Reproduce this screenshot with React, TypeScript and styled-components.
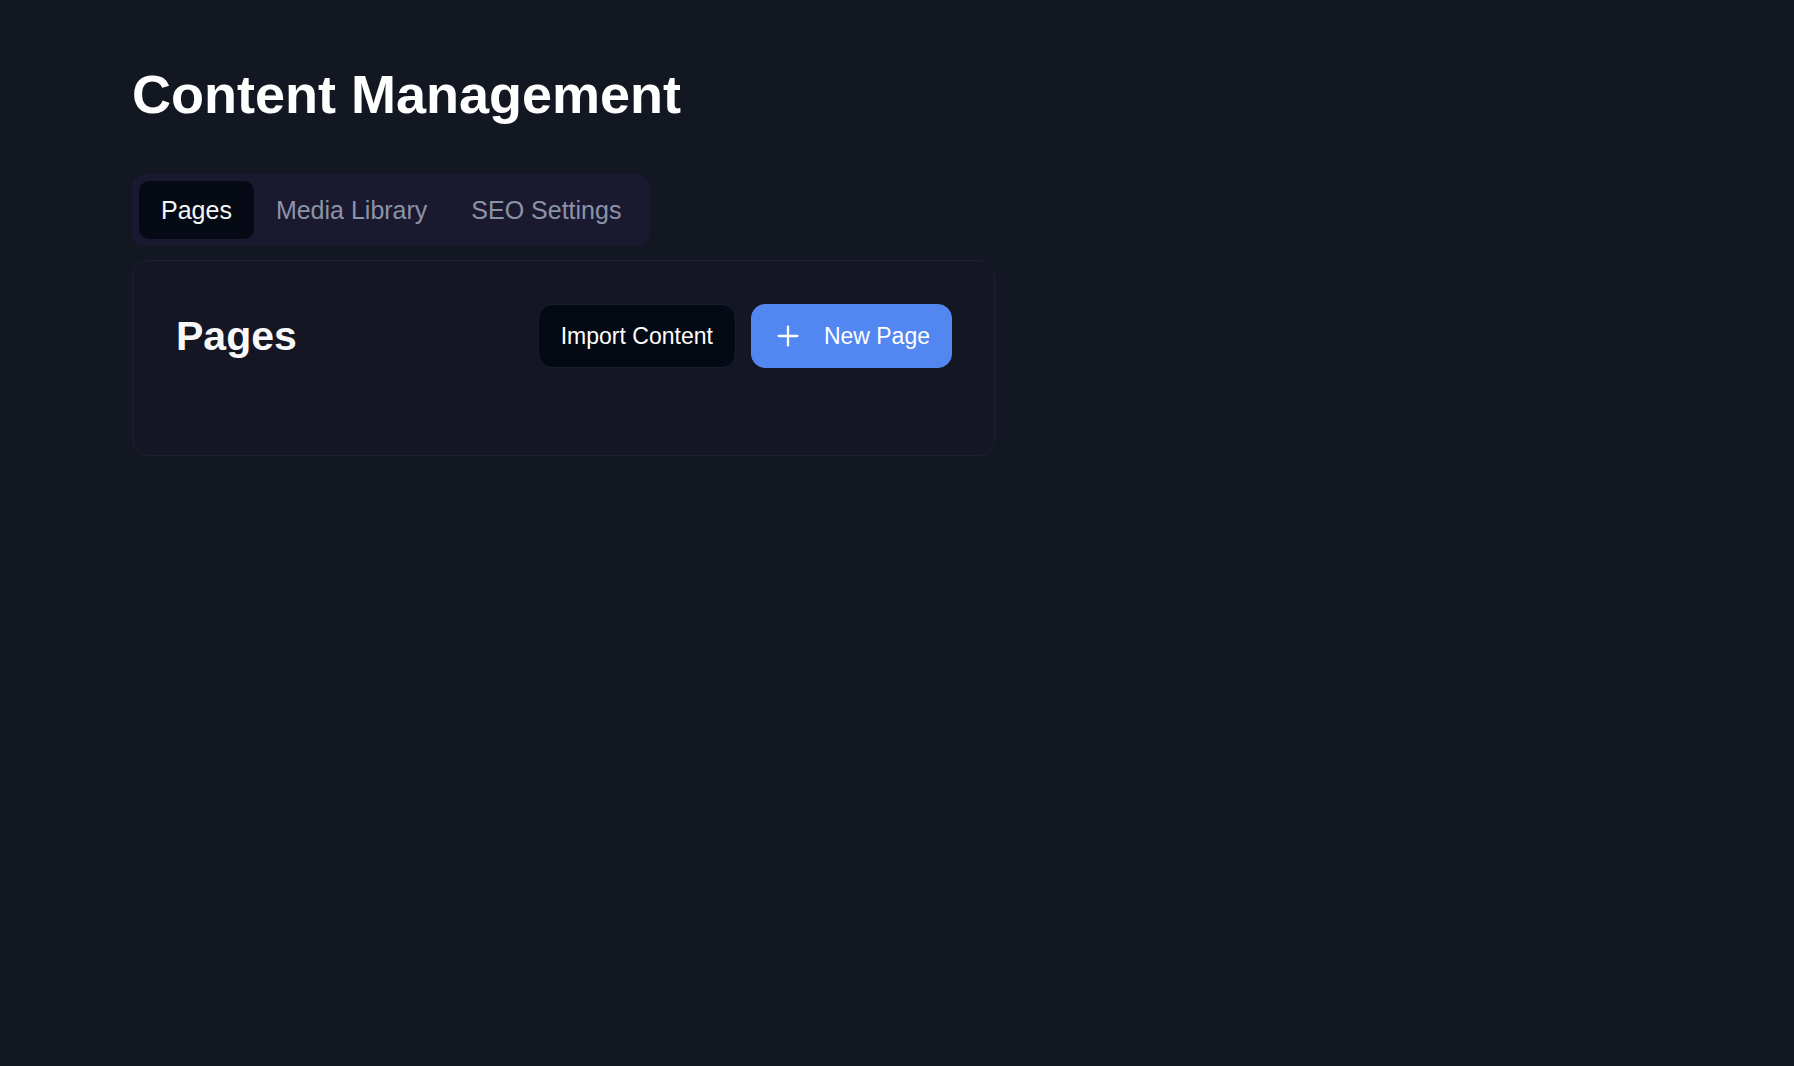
import React, { useState } from "react";
import styled, { createGlobalStyle } from "styled-components";
import { Plus } from "lucide-react";

const GlobalStyle = createGlobalStyle`
	html, body {
		margin: 0;
		padding: 0;
		background-color: #131722;
	}
	body {
		font-family: "Liberation Sans", Arial, Helvetica, sans-serif;
		color: #f8f8fa;
	}
	* {
		box-sizing: border-box;
	}
`;

const PageContainer = styled.div`
	min-height: 100vh;
	background-color: #131722;
	padding: 62px 132px;
	display: flex;
	flex-direction: column;
	align-items: flex-start;
`;

const PageTitle = styled.h1`
	margin: 0 0 48px 0;
	font-size: 54px;
	line-height: 64px;
	font-weight: 700;
	color: #ffffff;
`;

const TabList = styled.div`
	display: inline-flex;
	align-items: center;
	padding: 7px;
	border-radius: 13px;
	background-color: #1b1930;
`;

const TabButton = styled.button<{ $active?: boolean }>`
	height: 58px;
	padding: 0 22px;
	border: none;
	border-radius: 10px;
	font-family: inherit;
	font-size: 25px;
	cursor: pointer;
	background-color: ${(p) => (p.$active ? "#050a14" : "transparent")};
	color: ${(p) => (p.$active ? "#f5f6f8" : "#8b93a7")};
`;

const Card = styled.div`
	width: 863px;
	margin-top: 14px;
	padding: 43px 42px 87px 43px;
	border: 1px solid #1e1f34;
	border-radius: 17px;
	background-color: #141723;
`;

const CardHeader = styled.div`
	display: flex;
	align-items: center;
	justify-content: space-between;
	height: 64px;
`;

const CardTitle = styled.h2`
	margin: 0;
	font-size: 41px;
	line-height: 48px;
	font-weight: 700;
	color: #f8f8fa;
`;

const Actions = styled.div`
	display: flex;
	align-items: center;
	gap: 15px;
`;

const ActionButton = styled.button<{ $primary?: boolean }>`
	display: inline-flex;
	align-items: center;
	gap: 20px;
	height: 64px;
	padding: ${(p) => (p.$primary ? "0 21px 0 20px" : "0 22px")};
	border-radius: 14px;
	border: 1px solid ${(p) => (p.$primary ? "#5286f0" : "#1c1e30")};
	background-color: ${(p) => (p.$primary ? "#5286f0" : "#040a14")};
	color: #ffffff;
	font-family: inherit;
	font-size: 23px;
	cursor: pointer;
`;

const tabs = ["Pages", "Media Library", "SEO Settings"];

const App = () => {
	const [activeTab, setActiveTab] = useState("Pages");

	return (
		<>
			<GlobalStyle />
			<PageContainer>
				<PageTitle>Content Management</PageTitle>
				<TabList>
					{tabs.map((tab) => (
						<TabButton key={tab} $active={tab === activeTab} onClick={() => setActiveTab(tab)}>
							{tab}
						</TabButton>
					))}
				</TabList>
				<Card>
					<CardHeader>
						<CardTitle>Pages</CardTitle>
						<Actions>
							<ActionButton>Import Content</ActionButton>
							<ActionButton $primary>
								<Plus size={32} strokeWidth={1.75} />
								New Page
							</ActionButton>
						</Actions>
					</CardHeader>
				</Card>
			</PageContainer>
		</>
	);
};

export default App;
